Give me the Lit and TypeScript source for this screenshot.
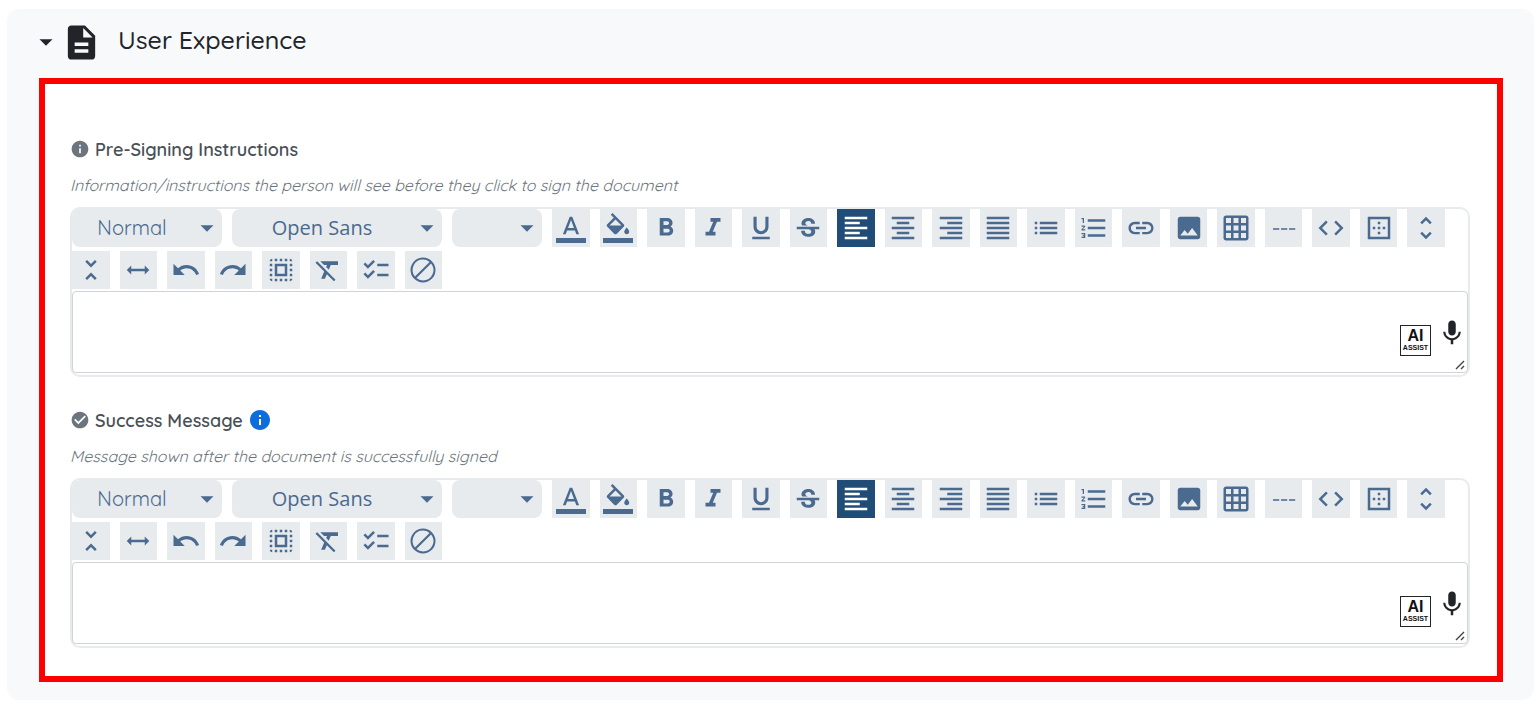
import { LitElement, html, css, svg } from "lit";
import { customElement, property } from "lit/decorators.js";
import { classMap } from "lit/directives/class-map.js";

const ICONS: Record<string, string> = {
  caret: "M6 9.5h12l-6 6z",
  file: "M14 2H6c-1.1 0-1.99.9-1.99 2L4 20c0 1.1.89 2 1.99 2H18c1.1 0 2-.9 2-2V8l-6-6zm2 16H8v-2h8v2zm0-4H8v-2h8v2zm-3-5V3.5L18.5 9H13z",
  info: "M12 2C6.48 2 2 6.48 2 12s4.48 10 10 10 10-4.48 10-10S17.52 2 12 2zm1 15h-2v-6h2v6zm0-8h-2V7h2v2z",
  check: "M12 2C6.48 2 2 6.48 2 12s4.48 10 10 10 10-4.48 10-10S17.52 2 12 2zm-2 15l-5-5 1.41-1.41L10 14.17l7.59-7.59L19 8l-9 9z",
  textColor: "M9.62 12L12 5.67 14.37 12M11 3L5.5 17h2.25l1.12-3h6.25l1.12 3h2.25L13 3h-2zM0 20h24v4H0z",
  fillColor: "M16.56 8.94L7.62 0 6.21 1.41l2.38 2.38-5.15 5.15c-.59.59-.59 1.54 0 2.12l5.5 5.5c.29.29.68.44 1.06.44s.77-.15 1.06-.44l5.5-5.5c.59-.58.59-1.53 0-2.12zM5.21 10L10 5.21 14.79 10H5.21zM19 11.5s-2 2.17-2 3.5c0 1.1.9 2 2 2s2-.9 2-2c0-1.33-2-3.5-2-3.5zM0 20h24v4H0z",
  bold: "M15.6 10.79c.97-.67 1.65-1.77 1.65-2.79 0-2.26-1.75-4-4-4H7v14h7.04c2.09 0 3.71-1.7 3.71-3.79 0-1.52-.86-2.82-2.15-3.42zM10 6.5h3c.83 0 1.5.67 1.5 1.5s-.67 1.5-1.5 1.5h-3v-3zm3.5 9H10v-3h3.5c.83 0 1.5.67 1.5 1.5s-.67 1.5-1.5 1.5z",
  italic: "M10 4v3h2.21l-3.42 8H6v3h8v-3h-2.21l3.42-8H18V4z",
  underline: "M12 17c3.31 0 6-2.69 6-6V3h-2.5v8c0 1.93-1.57 3.5-3.5 3.5S8.5 12.93 8.5 11V3H6v8c0 3.31 2.69 6 6 6zm-7 2v2h14v-2H5z",
  strike: "M7.2 9.8C6 7.5 7.7 4.8 10.1 4.3C13.2 3.3 17.7 4.7 17.6 8.5H14.6C14.6 8.2 14.5 7.9 14.5 7.7C14.3 7.1 13.9 6.8 13.3 6.6C12.5 6.3 11.2 6.4 10.5 6.9C9 8.2 10.4 9.5 12 10H7.4C7.3 9.9 7.3 9.8 7.2 9.8M21 13V11H3V13H12.6C12.8 13.1 13 13.1 13.2 13.2C13.8 13.5 14.3 13.7 14.5 14.3C14.6 14.7 14.7 15.2 14.5 15.6C14.3 16.1 13.9 16.3 13.4 16.5C11.6 17 9.4 16.3 9.5 14.1H6.5C6.4 16.7 8.6 18.5 11 18.8C14.8 19.6 19.3 17.2 17.3 12.9L21 13Z",
  alignLeft: "M3 3h18v2H3zM3 7h12v2H3zM3 11h18v2H3zM3 15h12v2H3zM3 19h18v2H3z",
  alignCenter: "M3 3h18v2H3zM7 7h10v2H7zM3 11h18v2H3zM7 15h10v2H7zM3 19h18v2H3z",
  alignRight: "M3 3h18v2H3zM9 7h12v2H9zM3 11h18v2H3zM9 15h12v2H9zM3 19h18v2H3z",
  alignJustify: "M3 3h18v2H3zM3 7h18v2H3zM3 11h18v2H3zM3 15h18v2H3zM3 19h18v2H3z",
  bullets: "M3 13h2v-2H3v2zm0 4h2v-2H3v2zm0-8h2V7H3v2zm4 4h14v-2H7v2zm0 4h14v-2H7v2zM7 7v2h14V7H7z",
  numbers: "M7,13V11H21V13H7M7,19V17H21V19H7M7,7V5H21V7H7M3,8V5H2V4H4V8H3M2,17V16H5V20H2V19H4V18.5H3V17.5H4V17H2M4.25,10A.75.75 0 0,1 5,10.75C5,10.95 4.92,11.14 4.79,11.27L3.12,13H5V14H2V13.08L4,11H2V10H4.25Z",
  link: "M3.9 12c0-1.71 1.39-3.1 3.1-3.1h4V7H7c-2.76 0-5 2.24-5 5s2.24 5 5 5h4v-1.9H7c-1.71 0-3.1-1.39-3.1-3.1zM8 13h8v-2H8v2zm9-6h-4v1.9h4c1.71 0 3.1 1.39 3.1 3.1s-1.39 3.1-3.1 3.1h-4V17h4c2.76 0 5-2.24 5-5s-2.24-5-5-5z",
  image: "M21 19V5c0-1.1-.9-2-2-2H5c-1.1 0-2 .9-2 2v14c0 1.1.9 2 2 2h14c1.1 0 2-.9 2-2zM8.5 13.5l2.5 3.01L14.5 12l4.5 6H5l3.5-4.5z",
  table: "M20 2H4c-1.1 0-2 .9-2 2v16c0 1.1.9 2 2 2h16c1.1 0 2-.9 2-2V4c0-1.1-.9-2-2-2zM8 20H4v-4h4v4zm0-6H4v-4h4v4zm0-6H4V4h4v4zm6 12h-4v-4h4v4zm0-6h-4v-4h4v4zm0-6h-4V4h4v4zm6 12h-4v-4h4v4zm0-6h-4v-4h4v4zm0-6h-4V4h4v4z",
  rule: "M3.2 12.200h5v1.200h-5zM9.600 12.200h5v1.200h-5zM16 12.200h5v1.200h-5z",
  code: "M9.4 16.6L4.8 12l4.6-4.6L8 6l-6 6 6 6 1.4-1.4zm5.2 0l4.6-4.6-4.6-4.6L16 6l6 6-6 6-1.4-1.4z",
  border: "M13 7h-2v2h2V7zm0 4h-2v2h2v-2zm4 0h-2v2h2v-2zM3 3v18h18V3H3zm16 16H5V5h14v14zm-6-4h-2v2h2v-2zm-4-4H7v2h2v-2z",
  unfoldMore: "M12 5.83L15.17 9l1.41-1.41L12 3 7.41 7.59 8.83 9 12 5.83zm0 12.34L8.83 15l-1.41 1.41L12 21l4.59-4.59L15.17 15 12 18.17z",
  unfoldLess: "M7.41 18.59L8.83 20 12 16.83 15.17 20l1.41-1.41L12 14l-4.59 4.59zm9.18-13.18L15.17 4 12 7.17 8.83 4 7.41 5.41 12 10l4.59-4.59z",
  widen: "M3 12l3.6-3.6V11h10.8V8.400L21 12l-3.600 3.600V13H6.600v2.600z",
  undo: "M12.5 8c-2.65 0-5.05.99-6.9 2.6L2 7v9h9l-3.62-3.62c1.39-1.16 3.16-1.88 5.12-1.88 3.54 0 6.55 2.31 7.6 5.5l2.37-.78C21.08 11.03 17.15 8 12.5 8z",
  redo: "M18.4 10.6C16.55 8.99 14.15 8 11.5 8c-4.65 0-8.58 3.03-9.96 7.22L3.9 16c1.05-3.19 4.05-5.5 7.6-5.5 1.95 0 3.73.72 5.12 1.88L13 16h9V7l-3.6 3.6z",
  selectAll: "M3 5h2V3c-1.1 0-2 .9-2 2zm0 8h2v-2H3v2zm4 8h2v-2H7v2zM3 9h2V7H3v2zm10-6h-2v2h2V3zm6 0v2h2c0-1.1-.9-2-2-2zM5 21v-2H3c0 1.1.9 2 2 2zm-2-4h2v-2H3v2zM9 3H7v2h2V3zm2 18h2v-2h-2v2zm8-8h2v-2h-2v2zm0 8c1.1 0 2-.9 2-2h-2v2zm0-12h2V7h-2v2zm0 8h2v-2h-2v2zm-4 4h2v-2h-2v2zm0-16h2V3h-2v2zM7 17h10V7H7v10zm2-8h6v6H9V9z",
  clear: "M3.27 5L2 6.27l6.97 6.97L6.5 19h3l1.57-3.66L16.73 21 18 19.73 3.55 5.27 3.27 5zM6 5v.18L8.82 8h2.4l-.72 1.68 2.1 2.1L14.21 8H20V5H6z",
  checklist: "M22 7h-9v2h9V7zm0 8h-9v2h9v-2zM5.54 11L2 7.460l1.41-1.41 2.12 2.12 4.240-4.240 1.41 1.41L5.54 11zm0 8L2 15.460l1.41-1.41 2.12 2.12 4.240-4.240 1.41 1.41L5.54 19z",
  none: "M12 2a10 10 0 100 20 10 10 0 000-20zm0 1.700a8.300 8.300 0 015.250 1.850L5.550 17.250A8.300 8.300 0 0112 3.700zm0 16.600a8.300 8.300 0 01-5.250-1.850L18.450 6.750A8.300 8.300 0 0112 20.300z",
  mic: "M12 14c1.66 0 2.99-1.34 2.99-3L15 5c0-1.66-1.34-3-3-3S9 3.34 9 5v6c0 1.66 1.34 3 3 3zm5.3-3c0 3-2.54 5.1-5.3 5.1S6.7 14 6.7 11H5c0 3.41 2.72 6.23 6 6.72V21h2v-3.28c3.28-.48 6-3.3 6-6.72h-1.7z",
};

const icon = (name: string, cls: string) => html`
  <svg class="icon ${cls}" viewBox="0 0 24 24" aria-hidden="true">${svg`<path d=${ICONS[name]}></path>`}</svg>
`;

const FIRST_ROW: [string, string][] = [
  ["textColor", "Text color"],
  ["fillColor", "Background color"],
  ["bold", "Bold"],
  ["italic", "Italic"],
  ["underline", "Underline"],
  ["strike", "Strikethrough"],
  ["alignLeft", "Align left"],
  ["alignCenter", "Align center"],
  ["alignRight", "Align right"],
  ["alignJustify", "Justify"],
  ["bullets", "Bulleted list"],
  ["numbers", "Numbered list"],
  ["link", "Insert link"],
  ["image", "Insert image"],
  ["table", "Insert table"],
  ["rule", "Horizontal rule"],
  ["code", "Edit HTML"],
  ["border", "Toggle borders"],
  ["unfoldMore", "Expand height"],
];

const SECOND_ROW: [string, string][] = [
  ["unfoldLess", "Reduce height"],
  ["widen", "Full width"],
  ["undo", "Undo"],
  ["redo", "Redo"],
  ["selectAll", "Select all"],
  ["clear", "Clear formatting"],
  ["checklist", "Checklist"],
  ["none", "Remove content"],
];

const shared = css`
  *,
  *::before,
  *::after {
    box-sizing: border-box;
  }
  .icon {
    display: block;
    flex: none;
    fill: currentColor;
  }
  button {
    margin: 0;
    padding: 0;
    border: 0;
    background: none;
    color: inherit;
    font: inherit;
    cursor: pointer;
  }
`;

@customElement("rich-editor")
export class RichEditor extends LitElement {
  @property() label = "";
  @property() hint = "";
  @property() glyph = "info";
  @property({ type: Boolean }) tip = false;

  static styles = [
    shared,
    css`
      :host {
        display: block;
      }
      .heading {
        display: flex;
        align-items: center;
        gap: 5px;
        height: 24px;
        color: #495057;
        font-size: 18px;
        font-weight: 600;
      }
      .glyph {
        width: 20px;
        height: 20px;
        color: #6c757d;
      }
      .tip {
        color: #0d6edb;
      }
      .tip-icon {
        width: 24px;
        height: 24px;
      }
      .hint {
        margin: 12px 0 10px;
        color: #6c757d;
        font-size: 16px;
        font-style: italic;
        font-weight: 400;
        line-height: 24px;
      }
      .editor {
        padding-bottom: 2px;
        border: 2px solid #e8ebee;
        border-radius: 10px;
        color: #4a6a8f;
      }
      .row {
        display: flex;
        gap: 10px;
        height: 38px;
        padding-right: 23px;
      }
      .row + .row {
        margin: 4px 0 2px;
      }
      .picker {
        display: grid;
        flex: none;
        align-items: center;
      }
      .picker > * {
        grid-area: 1 / 1;
      }
      .style {
        width: 150px;
      }
      .family {
        width: 210px;
      }
      .size {
        width: 90px;
      }
      select {
        appearance: none;
        width: 100%;
        height: 38px;
        margin: 0;
        padding: 0 30px 2px 0;
        border: 0;
        border-radius: 8px;
        background: #e8ebee;
        color: inherit;
        font-family: inherit;
        font-size: 20px;
        font-weight: 400;
        text-align: center;
        text-align-last: center;
      }
      .family select {
        font-family: "Open Sans", sans-serif;
      }
      .arrow {
        width: 26px;
        height: 26px;
        justify-self: end;
        margin-right: 2px;
        pointer-events: none;
      }
      .tools {
        display: grid;
        grid-auto-flow: column;
        grid-auto-columns: 1fr;
        gap: 10px;
        flex: 1;
        min-width: 0;
      }
      .tools.short {
        flex: none;
        width: 370px;
      }
      .tool {
        display: flex;
        align-items: center;
        justify-content: center;
        min-width: 0;
        background: #e8ebee;
      }
      .tool-icon {
        width: 30px;
        height: 30px;
      }
      .tool.on {
        background: #204d78;
        color: #fff;
      }
      .body {
        position: relative;
      }
      textarea {
        display: block;
        width: 100%;
        height: 82px;
        margin: 0;
        padding: 8px;
        border: 1px solid #ced4da;
        border-radius: 4px;
        outline: 0;
        resize: vertical;
        font: inherit;
        color: #212529;
      }
      textarea::-webkit-resizer {
        background: url("data:image/svg+xml,%3Csvg xmlns='http://www.w3.org/2000/svg' viewBox='0 0 15 15'%3E%3Cpath d='M4 12l8-8M9 12l3-3' stroke='%23444' stroke-width='1.4'/%3E%3C/svg%3E")
          center / 15px 15px no-repeat;
      }
      .assist {
        position: absolute;
        right: 1px;
        bottom: 17px;
        display: flex;
        gap: 6px;
        align-items: flex-end;
        color: #212529;
      }
      .ai {
        display: flex;
        flex-direction: column;
        align-items: center;
        justify-content: center;
        width: 31px;
        height: 31px;
        border: 1px solid #212529;
        background: #fff;
        color: #111;
        font-family: "Liberation Sans", Arial, sans-serif;
        font-size: 16px;
        font-weight: 700;
        line-height: 14px;
      }
      .ai small {
        font-size: 7px;
        line-height: 10px;
      }
      .mic {
        margin-bottom: 8px;
      }
      .mic-icon {
        width: 30px;
        height: 30px;
      }
    `,
  ];

  private tool([name, title]: [string, string]) {
    const on = name === "alignLeft";
    return html`
      <button
        type="button"
        class=${classMap({ tool: true, on })}
        aria-label=${title}
        aria-pressed=${on ? "true" : "false"}
      >
        ${icon(name, "tool-icon")}
      </button>
    `;
  }

  private picker(cls: string, title: string, value: string) {
    return html`
      <div class="picker ${cls}">
        <select aria-label=${title}>
          <option>${value}</option>
        </select>
        ${icon("caret", "arrow")}
      </div>
    `;
  }

  render() {
    return html`
      <div class="heading">
        ${icon(this.glyph, "glyph")}
        <label for="text">${this.label}</label>
        ${this.tip
          ? html`<button type="button" class="tip" aria-label="More information">${icon("info", "tip-icon")}</button>`
          : null}
      </div>
      <p class="hint" id="hint">${this.hint}</p>
      <div class="editor">
        <div class="row">
          ${this.picker("style", "Paragraph style", "Normal")}
          ${this.picker("family", "Font family", "Open Sans")}
          ${this.picker("size", "Font size", "")}
          <div class="tools">${FIRST_ROW.map((t) => this.tool(t))}</div>
        </div>
        <div class="row">
          <div class="tools short">${SECOND_ROW.map((t) => this.tool(t))}</div>
        </div>
        <div class="body">
          <textarea id="text" aria-describedby="hint"></textarea>
          <div class="assist">
            <button type="button" class="ai">AI<small>ASSIST</small></button>
            <button type="button" class="mic" aria-label="Dictate">${icon("mic", "mic-icon")}</button>
          </div>
        </div>
      </div>
    `;
  }
}

@customElement("app-root")
export class AppRoot extends LitElement {
  static styles = [
    shared,
    css`
      :host {
        display: block;
        padding: 9px 5px 6px 7px;
        background: #fff;
        font-family: Quicksand, Lato, sans-serif;
      }
      .card {
        padding: 0 31px 18px 32px;
        border-radius: 12px;
        background: #f8f9fb;
        color: #212529;
      }
      .header {
        display: flex;
        align-items: center;
        width: 100%;
        height: 69px;
        padding-bottom: 3px;
        text-align: left;
      }
      .toggle {
        width: 26px;
        height: 26px;
        margin-left: -6px;
      }
      .file {
        width: 41px;
        height: 41px;
      }
      h2 {
        margin: 0;
        font-size: 25px;
        font-weight: 500;
        line-height: 32px;
      }
      .title {
        display: flex;
        align-items: center;
        gap: 2px;
      }
      .title span {
        margin-left: 14px;
        padding-bottom: 4px;
      }
      .panel {
        display: grid;
        gap: 31px;
        padding: 53px 27px 28px 25px;
        border: 6px solid #f00;
        background: #fff;
      }
    `,
  ];

  render() {
    return html`
      <section class="card">
        <h2>
          <button type="button" class="header" aria-expanded="true">
            <span class="title">
              ${icon("caret", "toggle")} ${icon("file", "file")}
              <span>User Experience</span>
            </span>
          </button>
        </h2>
        <div class="panel">
          <rich-editor
            label="Pre-Signing Instructions"
            hint="Information/instructions the person will see before they click to sign the document"
          ></rich-editor>
          <rich-editor
            label="Success Message"
            hint="Message shown after the document is successfully signed"
            glyph="check"
            tip
          ></rich-editor>
        </div>
      </section>
    `;
  }
}
